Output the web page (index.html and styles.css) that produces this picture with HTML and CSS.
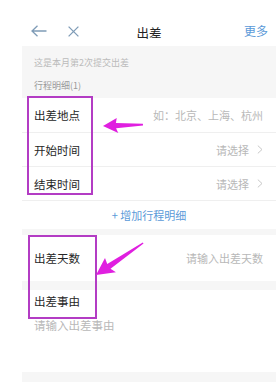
FILE: index.html
```html
<!DOCTYPE html>
<html lang="zh-CN">
<head>
<meta charset="UTF-8">
<meta name="viewport" content="width=device-width, initial-scale=1.0">
<title>出差</title>
<link rel="stylesheet" href="styles.css">
</head>
<body>

<div class="screen">
  <div class="topbar">
    <div class="nav-left">
      <svg class="ico-back" width="16" height="12" viewBox="0 0 16 12"><path d="M15.5 6H1M6.5 .8L1 6l5.5 5.2" fill="none" stroke="#7f9cb7" stroke-width="1.3"/></svg>
      <svg class="ico-close" width="11" height="11" viewBox="0 0 11 11"><path d="M.6 .6l9.8 9.8M10.4 .6L.6 10.4" fill="none" stroke="#7f9cb7" stroke-width="1.3"/></svg>
    </div>
    <div class="title">出差</div>
    <div class="nav-right">更多</div>
  </div>

  <div class="main">
    <div class="notice">这是本月第2次提交出差</div>
    <div class="group-title">行程明细(1)</div>

    <div class="card">
      <div class="field"><span class="label">出差地点</span><span class="hint">如：北京、上海、杭州</span></div>
      <div class="field"><span class="label">开始时间</span><span class="hint">请选择<svg class="chev" width="6" height="9" viewBox="0 0 6 9"><path d="M.8 .6L5 4.5 .8 8.4" fill="none" stroke="#c8c8c8" stroke-width="1"/></svg></span></div>
      <div class="field"><span class="label">结束时间</span><span class="hint">请选择<svg class="chev" width="6" height="9" viewBox="0 0 6 9"><path d="M.8 .6L5 4.5 .8 8.4" fill="none" stroke="#c8c8c8" stroke-width="1"/></svg></span></div>
      <div class="add-row">+ 增加行程明细</div>
    </div>

    <div class="card days">
      <div class="field tall"><span class="label">出差天数</span><span class="hint">请输入出差天数</span></div>
    </div>

    <div class="card reason">
      <div class="label">出差事由</div>
      <div class="hint">请输入出差事由</div>
    </div>
  </div>
</div>

<!-- 标注 -->
<div class="mark mark-1"></div>
<div class="mark mark-2"></div>
<svg class="arrows" width="276" height="390" viewBox="0 0 276 390">
  <polygon transform="translate(103 126) rotate(-2)" points="0,0 14,-7.5 13,-2.6 40,-0.8 40,0.8 13,2.8 15,7.5" fill="#e01fe0"/>
  <polygon transform="translate(96 275) rotate(-34.2)" points="0,0 17,-9 15.5,-2.8 57,-0.7 57,0.7 15.5,3 18,9" fill="#e01fe0"/>
</svg>

</body>
</html>
```

FILE: styles.css
```css
:root{
  --bg:#f6f6f6; --line:#efefef; --text:#262626; --hint:#b8b8b8; --blue:#5b9ad8; --mark:#b33cc4;
}
body{margin:0;background:#fff;font-family:"Noto Sans CJK SC","Noto Sans",sans-serif;color:var(--text)}
.screen{margin-left:22px;width:254px}

.topbar{height:28px;padding-top:18px;display:grid;grid-template-columns:1fr auto 1fr;align-items:center}
.nav-left{display:flex;align-items:center;gap:21px;padding-left:9px;margin-top:-2px}
.title{font-size:12.5px;color:#222}
.nav-right{justify-self:end;padding-right:8px;font-size:12px;color:var(--blue);margin-top:-4px}

.main{background:var(--bg);padding-bottom:10px}
.notice{padding:11px 12px 0;font-size:9px;line-height:12px;color:#bbb}
.group-title{padding:11px 12px 6px;font-size:9px;line-height:12px;color:#999}

.card{background:#fff}
.field{display:flex;justify-content:space-between;align-items:center;height:34px;padding:0 13px 0 12px}
.field + .field{border-top:1px solid var(--line);height:33px}
.field.tall{height:46px}
.label{font-size:11.5px;color:var(--text)}
.hint{font-size:11px;color:var(--hint);display:flex;align-items:center;gap:8px}
.chev{display:block}
.add-row{height:28px;line-height:28px;text-align:center;font-size:11px;color:var(--blue);border-top:1px solid var(--line)}

.days{margin-top:6px}
.reason{margin-top:9px;height:82px;padding:0 12px;box-sizing:border-box}
.reason .label{line-height:22px}
.reason .hint{margin-top:5px;font-size:11.5px;display:block}

.mark{position:absolute;border:2px solid var(--mark);box-sizing:border-box}
.mark-1{left:27px;top:96px;width:66px;height:99px}
.mark-2{left:28px;top:235px;width:69px;height:84px}
.arrows{position:absolute;left:0;top:0}
```
